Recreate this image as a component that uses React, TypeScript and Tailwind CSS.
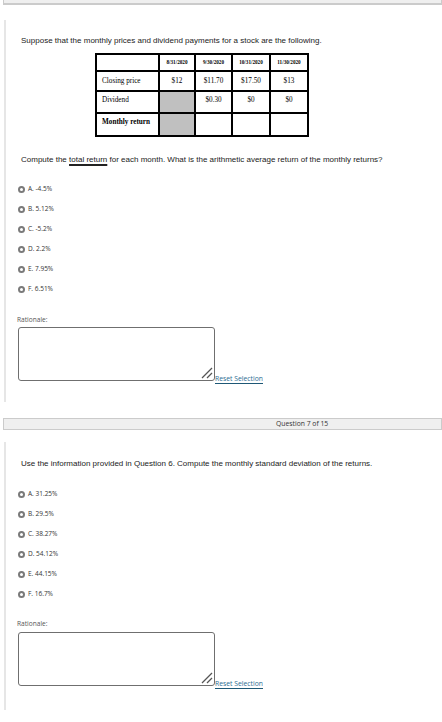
import React from "react";

const Q6_OPTIONS = ["A. -4.5%", "B. 5.12%", "C. -5.2%", "D. 2.2%", "E. 7.95%", "F. 6.51%"];
const Q7_OPTIONS = ["A. 31.25%", "B. 29.5%", "C. 38.27%", "D. 54.12%", "E. 44.15%", "F. 16.7%"];

const DATES = ["8/31/2020", "9/30/2020", "10/31/2020", "11/30/2020"];

function QuestionBar({ label, className }: { label: string; className?: string }) {
  return (
    <div
      className={`ml-[3px] flex items-center border-[1.5px] border-[#cbcbcb] bg-[#efefef] pl-[272px] text-[6.8px] text-[#333] ${className ?? ""}`}
      style={{ fontFamily: '"Open Sans", sans-serif' }}
    >
      {label}
    </div>
  );
}

function Options({ items }: { items: string[] }) {
  return (
    <div className="flex flex-col gap-[10px]">
      {items.map((item) => (
        <label key={item} className="flex h-[10px] items-center gap-[3px] pl-[12px]">
          <span className="block h-[7px] w-[7px] rounded-full border-2 border-[#7a7a7a] bg-white" />
          <span className="text-[6.5px] leading-none text-[#333]">{item}</span>
        </label>
      ))}
    </div>
  );
}

function Rationale() {
  return (
    <div style={{ fontFamily: '"Open Sans", sans-serif' }}>
      <p className="pl-[11px] text-[6.6px] leading-[9px] text-[#555]">Rationale:</p>
      <div className="mt-[3.5px] flex items-end pl-[12px]">
        <div className="flex h-[54px] w-[197px] items-end justify-end rounded-[3px] border-[1.5px] border-[#6f6f6f] bg-white p-[1px]">
          <svg width="13" height="13" viewBox="0 0 13 13" className="block">
            <line x1="2" y1="12" x2="12" y2="2" stroke="#555" strokeWidth="1.2" />
            <line x1="7" y1="12" x2="12" y2="7" stroke="#555" strokeWidth="1.2" />
          </svg>
        </div>
        <a className="mb-[-3px] border-b-[1.5px] border-[#1e5876] text-[6.8px] leading-[8px] text-[#2c6d92]">
          Reset Selection
        </a>
      </div>
    </div>
  );
}

function ReturnTable() {
  const cell = "border-2 border-black";
  return (
    <table
      className="ml-[89px] mt-[8.5px] border-collapse text-black"
      style={{ fontFamily: '"Liberation Serif", serif' }}
    >
      <tbody>
        <tr className="h-[17px]">
          <td className={`${cell} w-[63px]`} />
          {DATES.map((d, i) => (
            <td
              key={d}
              className={`${cell} ${i === 0 ? "w-[36px]" : i === 1 ? "w-[37px]" : "w-[38px]"} text-center align-middle text-[5.2px] font-bold`}
            >
              {d}
            </td>
          ))}
        </tr>
        <tr className="h-[20px]">
          <td className={`${cell} pl-[5px] align-middle text-[7.2px]`}>Closing price</td>
          {["$12", "$11.70", "$17.50", "$13"].map((v) => (
            <td key={v} className={`${cell} text-center align-middle text-[7.2px]`}>
              {v}
            </td>
          ))}
        </tr>
        <tr className="h-[22px]">
          <td className={`${cell} pl-[5px] pt-[3px] align-top text-[7.2px]`}>Dividend</td>
          <td className={`${cell} bg-[#c0c0c0]`} />
          {["$0.30", "$0", "$0"].map((v, i) => (
            <td key={i} className={`${cell} pt-[3px] text-center align-top text-[7.2px]`}>
              {v}
            </td>
          ))}
        </tr>
        <tr className="h-[23px]">
          <td className={`${cell} pl-[5px] pt-[3px] align-top text-[7.2px] font-bold`}>Monthly return</td>
          <td className={`${cell} bg-[#c0c0c0]`} />
          <td className={cell} />
          <td className={cell} />
          <td className={cell} />
        </tr>
      </tbody>
    </table>
  );
}

export default function App() {
  return (
    <div
      className="min-h-[722px] w-[442px] overflow-hidden bg-white"
      style={{ fontFamily: '"Liberation Sans", Arial, sans-serif' }}
    >
      <QuestionBar label="Question 6 of 15" className="mt-[-11px] h-[16px] border-b-2" />

      <section className="ml-[4px] mt-[15px] border-l-2 border-[#e6e6e6] pb-[21px] pt-[15.5px]">
        <p className="pl-[15px] text-[8px] leading-[9px] text-[#222]">
          Suppose that the monthly prices and dividend payments for a stock are the following.
        </p>
        <ReturnTable />
        <p className="mt-[17.5px] pl-[15px] text-[8px] leading-[9px] text-[#222]">
          Compute the{" "}
          <span className="underline decoration-[1.5px] underline-offset-[1.5px]">total return</span> for each
          month. What is the arithmetic average return of the monthly returns?
        </p>
        <div className="mt-[20.5px]" style={{ fontFamily: '"Open Sans", sans-serif' }}>
          <Options items={Q6_OPTIONS} />
        </div>
        <div className="mt-[20.5px]">
          <Rationale />
        </div>
      </section>

      <QuestionBar label="Question 7 of 15" className="mt-[16px] h-[12px]" />

      <section className="ml-[4px] mt-[12px] border-l-2 border-[#e6e6e6] pb-[24px] pt-[17px]">
        <p className="pl-[15px] text-[8px] leading-[9px] text-[#222]">
          Use the information provided in Question 6. Compute the monthly standard deviation of the returns.
        </p>
        <div className="mt-[21.5px]" style={{ fontFamily: '"Open Sans", sans-serif' }}>
          <Options items={Q7_OPTIONS} />
        </div>
        <div className="mt-[19.5px]">
          <Rationale />
        </div>
      </section>
    </div>
  );
}
